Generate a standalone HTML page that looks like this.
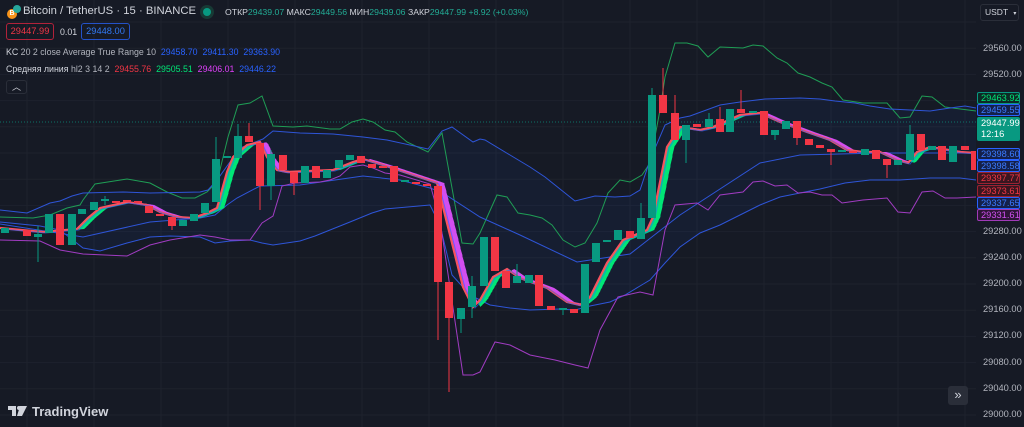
<!DOCTYPE html>
<html><head><meta charset="utf-8"><style>
*{margin:0;padding:0;box-sizing:border-box}
body{width:1024px;height:427px;background:#161a25;overflow:hidden;position:relative;font-family:"Liberation Sans","Noto Sans CJK SC",sans-serif;color:#d1d4dc}
svg{position:absolute;left:0;top:0}
.t{position:absolute;white-space:nowrap}
.ax{position:absolute;left:983px;font-size:9.3px;color:#b2b5be}
.pl{position:absolute;left:977px;width:43px;height:12px;font-size:9.3px;line-height:10px;padding-left:3px;border:1px solid;border-radius:2px}
</style></head><body>
<svg id="s" width="1024" height="427"></svg>

<div class="t" style="left:6px;top:4px;width:15px;height:15px">
<div style="position:absolute;left:1px;top:5px;width:10px;height:10px;border-radius:50%;background:#f7931a;font-size:7px;color:#fff;text-align:center;line-height:10px;font-weight:bold">B</div>
<div style="position:absolute;left:7px;top:1px;width:8px;height:8px;border-radius:50%;background:#26a69a"></div></div>
<div class="t" style="left:23px;top:5px;font-size:11.3px;color:#d1d4dc">Bitcoin / TetherUS · 15 · BINANCE</div>
<div class="t" style="left:203px;top:8px;width:8px;height:8px;border-radius:50%;background:#089981;box-shadow:0 0 0 3px #173a35"></div>
<div class="t" style="left:225px;top:7px;font-size:8.7px;color:#d1d4dc">ОТКР<span style="color:#22ab94">29439.07</span> МАКС<span style="color:#22ab94">29449.56</span> МИН<span style="color:#22ab94">29439.06</span> ЗАКР<span style="color:#22ab94">29447.99 +8.92 (+0.03%)</span></div>
<div class="t" style="left:6px;top:23px;width:48px;height:17px;border:1px solid #b2223a;border-radius:3px;font-size:9.3px;color:#f23645;text-align:center;line-height:15px">29447.99</div>
<div class="t" style="left:60px;top:27px;font-size:8.8px;color:#d1d4dc">0.01</div>
<div class="t" style="left:81px;top:23px;width:49px;height:17px;border:1px solid #2452c8;border-radius:3px;font-size:9.3px;color:#3179f5;text-align:center;line-height:15px">29448.00</div>
<div class="t" style="left:6px;top:47px;font-size:8.8px;color:#b2b5be"><span style="color:#d1d4dc">KC</span> 20 2 close Average True Range 10 &nbsp;<span style="color:#2962ff">29458.70 &nbsp;29411.30 &nbsp;29363.90</span></div>
<div class="t" style="left:6px;top:64px;font-size:8.8px;color:#b2b5be"><span style="color:#d1d4dc">Средняя линия</span> hl2 3 14 2 &nbsp;<span style="color:#f23645">29455.76</span> &nbsp;<span style="color:#00e676">29505.51</span> &nbsp;<span style="color:#e040fb">29406.01</span> &nbsp;<span style="color:#2962ff">29446.22</span></div>
<div class="t" style="left:6px;top:80px;width:21px;height:14px;border:1px solid #2a2e39;border-radius:3px;font-size:9px;color:#d1d4dc;text-align:center;line-height:12px">︿</div>

<div class="t" style="left:980px;top:4px;width:39px;height:17px;border:1px solid #2a2e39;border-radius:3px;font-size:8.5px;color:#d1d4dc;padding-left:4px;line-height:15px">USDT <span style="font-size:6px;margin-left:3px">▾</span></div>

<div class="ax" style="top:43px">29560.00</div>
<div class="ax" style="top:69px">29520.00</div>
<div class="ax" style="top:226px">29280.00</div>
<div class="ax" style="top:252px">29240.00</div>
<div class="ax" style="top:278px">29200.00</div>
<div class="ax" style="top:304px">29160.00</div>
<div class="ax" style="top:330px">29120.00</div>
<div class="ax" style="top:357px">29080.00</div>
<div class="ax" style="top:383px">29040.00</div>
<div class="ax" style="top:409px">29000.00</div>

<div class="pl" style="top:92px;border-color:#089981;background:#0d2a26;color:#00e676">29463.92</div>
<div class="pl" style="top:104px;border-color:#2962ff;background:#14204a;color:#3b7bff">29459.55</div>
<div class="pl" style="top:117px;height:24px;border-color:#089981;background:#089981;color:#fff;line-height:11px">29447.99<br>12:16</div>
<div class="pl" style="top:148px;border-color:#2962ff;background:#14204a;color:#3b7bff">29398.60</div>
<div class="pl" style="top:160px;border-color:#2962ff;background:#14204a;color:#3b7bff">29398.58</div>
<div class="pl" style="top:172px;border-color:#9c2232;background:#3a1620;color:#f23645">29397.77</div>
<div class="pl" style="top:185px;border-color:#9c2232;background:#3a1620;color:#f23645">29373.61</div>
<div class="pl" style="top:197px;border-color:#2962ff;background:#14204a;color:#3b7bff">29337.65</div>
<div class="pl" style="top:209px;border-color:#a03ab8;background:#2e1538;color:#d050f0">29331.61</div>

<div class="t" style="left:948px;top:386px;width:20px;height:19px;background:#2a2e39;border-radius:3px;color:#d1d4dc;font-size:13px;text-align:center;line-height:18px">»</div>

<div class="t" style="left:8px;top:404px;font-size:13px;font-weight:bold;color:#d1d4dc"><svg style="position:relative;display:inline-block;vertical-align:-1px;margin-right:4px" width="20" height="11"><path d="M0 0H8V10H4V4H0Z M9 0a2 2 0 1 1 0.01 0Z M12 0H19L14 10H9Z" fill="#d1d4dc"/><circle cx="11" cy="2" r="2" fill="#d1d4dc"/></svg>TradingView</div>

<script>
const s=document.getElementById('s');let h='';
for(let x=27;x<976;x+=67)h+=`<line x1="${x}" y1="0" x2="${x}" y2="427" stroke="#1e222d"/>`;
for(let y=22;y<427;y+=26.2)h+=`<line x1="0" y1="${y}" x2="976" y2="${y}" stroke="#1e222d"/>`;
const P=a=>a.map(p=>p.join(',')).join(' ');
const green=[[0,217],[33,218],[50,215],[67,208],[80,205],[83,200],[95,184],[127,179],[150,183],[167,192],[182,198],[195,198],[207,192],[217,182],[228,137],[238,105],[250,103],[262,96],[273,126],[293,127],[307,126],[330,129],[340,129],[352,122],[363,119],[373,122],[385,130],[395,132],[407,142],[428,152],[442,133],[462,243],[473,244],[480,233],[497,195],[507,197],[518,213],[530,215],[542,218],[552,225],[563,240],[575,247],[585,243],[597,223],[608,193],[620,180],[630,182],[642,175],[650,163],[660,110],[665,77],[675,43],[687,43],[698,46],[708,57],[720,47],[743,48],[753,45],[763,46],[777,58],[787,63],[798,73],[810,77],[822,83],[832,87],[843,100],[863,103],[887,103],[900,118],[910,117],[922,96],[932,97],[945,107],[976,111]];
const bu=[[0,210],[27,213],[50,203],[60,201],[72,196],[83,193],[123,192],[150,193],[200,192],[208,190],[217,180],[240,148],[263,139],[273,131],[300,133],[333,134],[363,137],[387,140],[428,149],[442,131],[452,127],[473,142],[480,139],[485,140],[510,155],[530,167],[545,177],[560,189],[575,201],[595,196],[615,197],[630,196],[640,190],[650,160],[665,125],[680,118],[690,116],[720,105],[740,102],[765,99],[800,98],[820,99],[835,101],[855,103],[870,106],[890,109],[930,111],[950,108],[965,106],[976,108]];
const bl=[[0,222],[40,226],[60,230],[83,248],[100,251],[127,243],[150,237],[170,236],[200,237],[215,243],[230,241],[250,240],[262,243],[273,245],[300,241],[315,236],[330,230],[350,222],[372,213],[385,209],[430,205],[440,225],[452,275],[470,295],[480,300],[490,305],[510,308],[530,310],[560,309],[575,310],[590,306],[610,302],[625,295],[640,286],[650,280],[665,263],[680,247],[700,233],[720,225],[740,215],[760,205],[780,197],[800,193],[820,189],[845,183],[870,180],[900,180],[930,178],[960,178],[976,180]];
const bm=[[0,224],[83,237],[150,222],[200,218],[215,215],[227,205],[237,198],[260,186],[300,185],[363,176],[400,180],[430,188],[443,193],[480,217],[520,235],[577,262],[630,254],[680,215],[760,163],[800,155],[880,153],[976,153]];
const pu=[[0,240],[40,241],[60,250],[83,254],[127,256],[150,245],[170,240],[200,235],[215,237],[230,240],[250,240],[262,223],[273,216],[282,186],[295,183],[320,182],[330,180],[340,176],[350,167],[363,165],[373,168],[385,173],[400,175],[430,184],[440,220],[463,375],[473,375],[480,372],[495,342],[510,345],[530,355],[555,360],[575,365],[588,368],[600,330],[618,297],[640,292],[653,295],[665,230],[675,205],[697,203],[708,210],[720,195],[743,192],[753,182],[763,181],[775,186],[787,185],[798,193],[810,192],[822,195],[832,195],[842,203],[863,200],[887,198],[898,212],[910,213],[922,192],[933,191],[945,198],[957,198],[976,197]];
h+=`<polygon points="${P(bu)} ${P(bl.slice().reverse())}" fill="rgba(41,98,255,0.06)"/>`;
h+=`<line x1="0" y1="122" x2="976" y2="122" stroke="#089981" stroke-dasharray="1,2" opacity=".7"/>`;
const ln=(a,c)=>h+=`<polyline points="${P(a)}" fill="none" stroke="${c}" stroke-width="1"/>`;
ln(green,'#1f9d55');ln(bu,'#2e55d8');ln(bl,'#2e55d8');ln(bm,'#2e55d8');ln(pu,'#a13cc2');
const rb=[[0,228],[43,232],[77,229],[88,218],[100,208],[127,202],[147,205],[160,212],[177,217],[193,218],[207,213],[217,208],[227,172],[233,157],[247,145],[260,142],[267,157],[277,170],[287,172],[333,170],[353,162],[363,159],[383,165],[437,183],[447,223],[463,287],[473,307],[480,300],[493,277],[507,269],[520,278],[547,288],[567,302],[580,305],[590,297],[607,263],[623,240],[647,230],[653,217],[667,147],[680,127],[700,130],[713,127],[740,115],[760,113],[780,122],[807,132],[830,140],[847,150],[863,152],[880,152],[897,160],[908,163],[917,152],[930,147],[960,152],[976,153]];
function f(a,x){if(x<=a[0][0])return a[0][1];for(let i=1;i<a.length;i++)if(x<=a[i][0]){const[x0,y0]=a[i-1],[x1,y1]=a[i];return y0+(y1-y0)*(x-x0)/(x1-x0)}return a[a.length-1][1]}
const L=7;
for(let x=0;x<976;x+=2){const a1=f(rb,x),a2=f(rb,x+2),b1=f(rb,x-L),b2=f(rb,x+2-L);const c=(a1<b1)?'#00e676':'#d24ef0';h+=`<polygon points="${x},${a1} ${x+2.4},${a2} ${x+2.4},${b2} ${x},${b1}" fill="${c}"/>`}
h+=`<polyline points="${P(rb)}" fill="none" stroke="#f7525f" stroke-width="2.2"/>`;
h+=`<polyline points="${P(rb.map(p=>[p[0]+2,p[1]+1]))}" fill="none" stroke="#2962ff" stroke-width="1" opacity=".6"/>`;
const C=[[5,228,233,0,0,1],[27,230,236,0,0,0],[38,234,237,226,262,1],[49,214,233,0,0,1],[60,214,245,0,0,0],[72,214,245,0,0,1],[82,209,214,0,0,1],[94,202,210,0,0,1],[105,199,201,196,205,1],[116,201,203,0,0,0],[127,200,202,0,0,0],[138,201,203,0,0,0],[149,206,213,0,0,0],[160,214,216,0,0,0],[172,217,226,0,230,0],[183,220,226,0,0,1],[194,214,221,0,0,1],[205,203,213,0,0,1],[216,159,202,137,0,1],[227,156,158,0,0,1],[238,136,158,124,0,1],[249,136,142,123,0,0],[260,143,186,0,210,0],[271,154,186,150,200,1],[283,155,170,0,0,0],[294,172,183,0,195,0],[305,166,183,0,0,1],[316,166,178,0,0,0],[327,170,178,0,0,1],[339,160,168,0,0,1],[350,155,160,0,0,1],[361,156,163,0,0,0],[372,164,168,0,0,0],[383,166,168,0,0,0],[394,166,182,0,0,0],[405,180,182,0,0,1],[416,182,184,0,0,0],[427,184,186,0,0,0],[438,186,282,0,340,0],[449,282,318,0,392,0],[461,308,319,0,333,1],[472,286,307,276,318,1],[484,237,286,0,0,1],[495,237,271,0,0,0],[506,271,288,0,0,0],[517,276,283,264,0,1],[529,275,283,0,0,1],[539,275,306,0,0,0],[551,306,310,0,0,0],[563,308,310,0,315,1],[574,309,313,0,0,0],[585,264,313,0,0,1],[596,243,262,0,0,1],[607,240,242,0,0,1],[618,230,240,0,0,1],[630,231,238,0,0,0],[641,218,239,203,0,1],[652,95,218,88,0,1],[663,95,113,68,0,0],[675,113,140,95,0,0],[686,125,140,0,163,1],[697,124,127,0,0,0],[709,119,127,113,0,1],[720,119,132,107,0,0],[730,109,132,0,0,1],[741,109,113,90,0,0],[753,111,113,0,0,1],[764,111,135,0,0,0],[775,130,135,0,140,1],[786,121,129,0,0,1],[797,121,138,0,145,0],[809,139,145,0,0,0],[820,145,148,0,0,0],[831,149,152,0,165,0],[842,150,152,0,0,1],[853,151,153,0,0,0],[865,149,155,0,0,1],[876,150,159,0,0,0],[887,159,165,0,178,0],[898,160,165,0,0,1],[910,134,160,125,0,1],[921,134,150,0,0,0],[932,146,150,0,0,1],[942,146,160,0,0,0],[953,146,162,0,0,1],[965,146,150,0,0,0],[975,151,170,0,0,0]];
for(const[x,t,b,wt,wb,g]of C){const c=g?'#089981':'#f23645';const b2=Math.max(b,t+2);
if(wt||wb)h+=`<line x1="${x}" y1="${wt||t}" x2="${x}" y2="${wb||b2}" stroke="${c}"/>`;
h+=`<rect x="${x-4}" y="${t}" width="8" height="${b2-t}" fill="${c}"/>`}
h+=`<rect x="976" y="0" width="48" height="427" fill="#161a25"/>`;
s.innerHTML=h;
</script>
</body></html>
